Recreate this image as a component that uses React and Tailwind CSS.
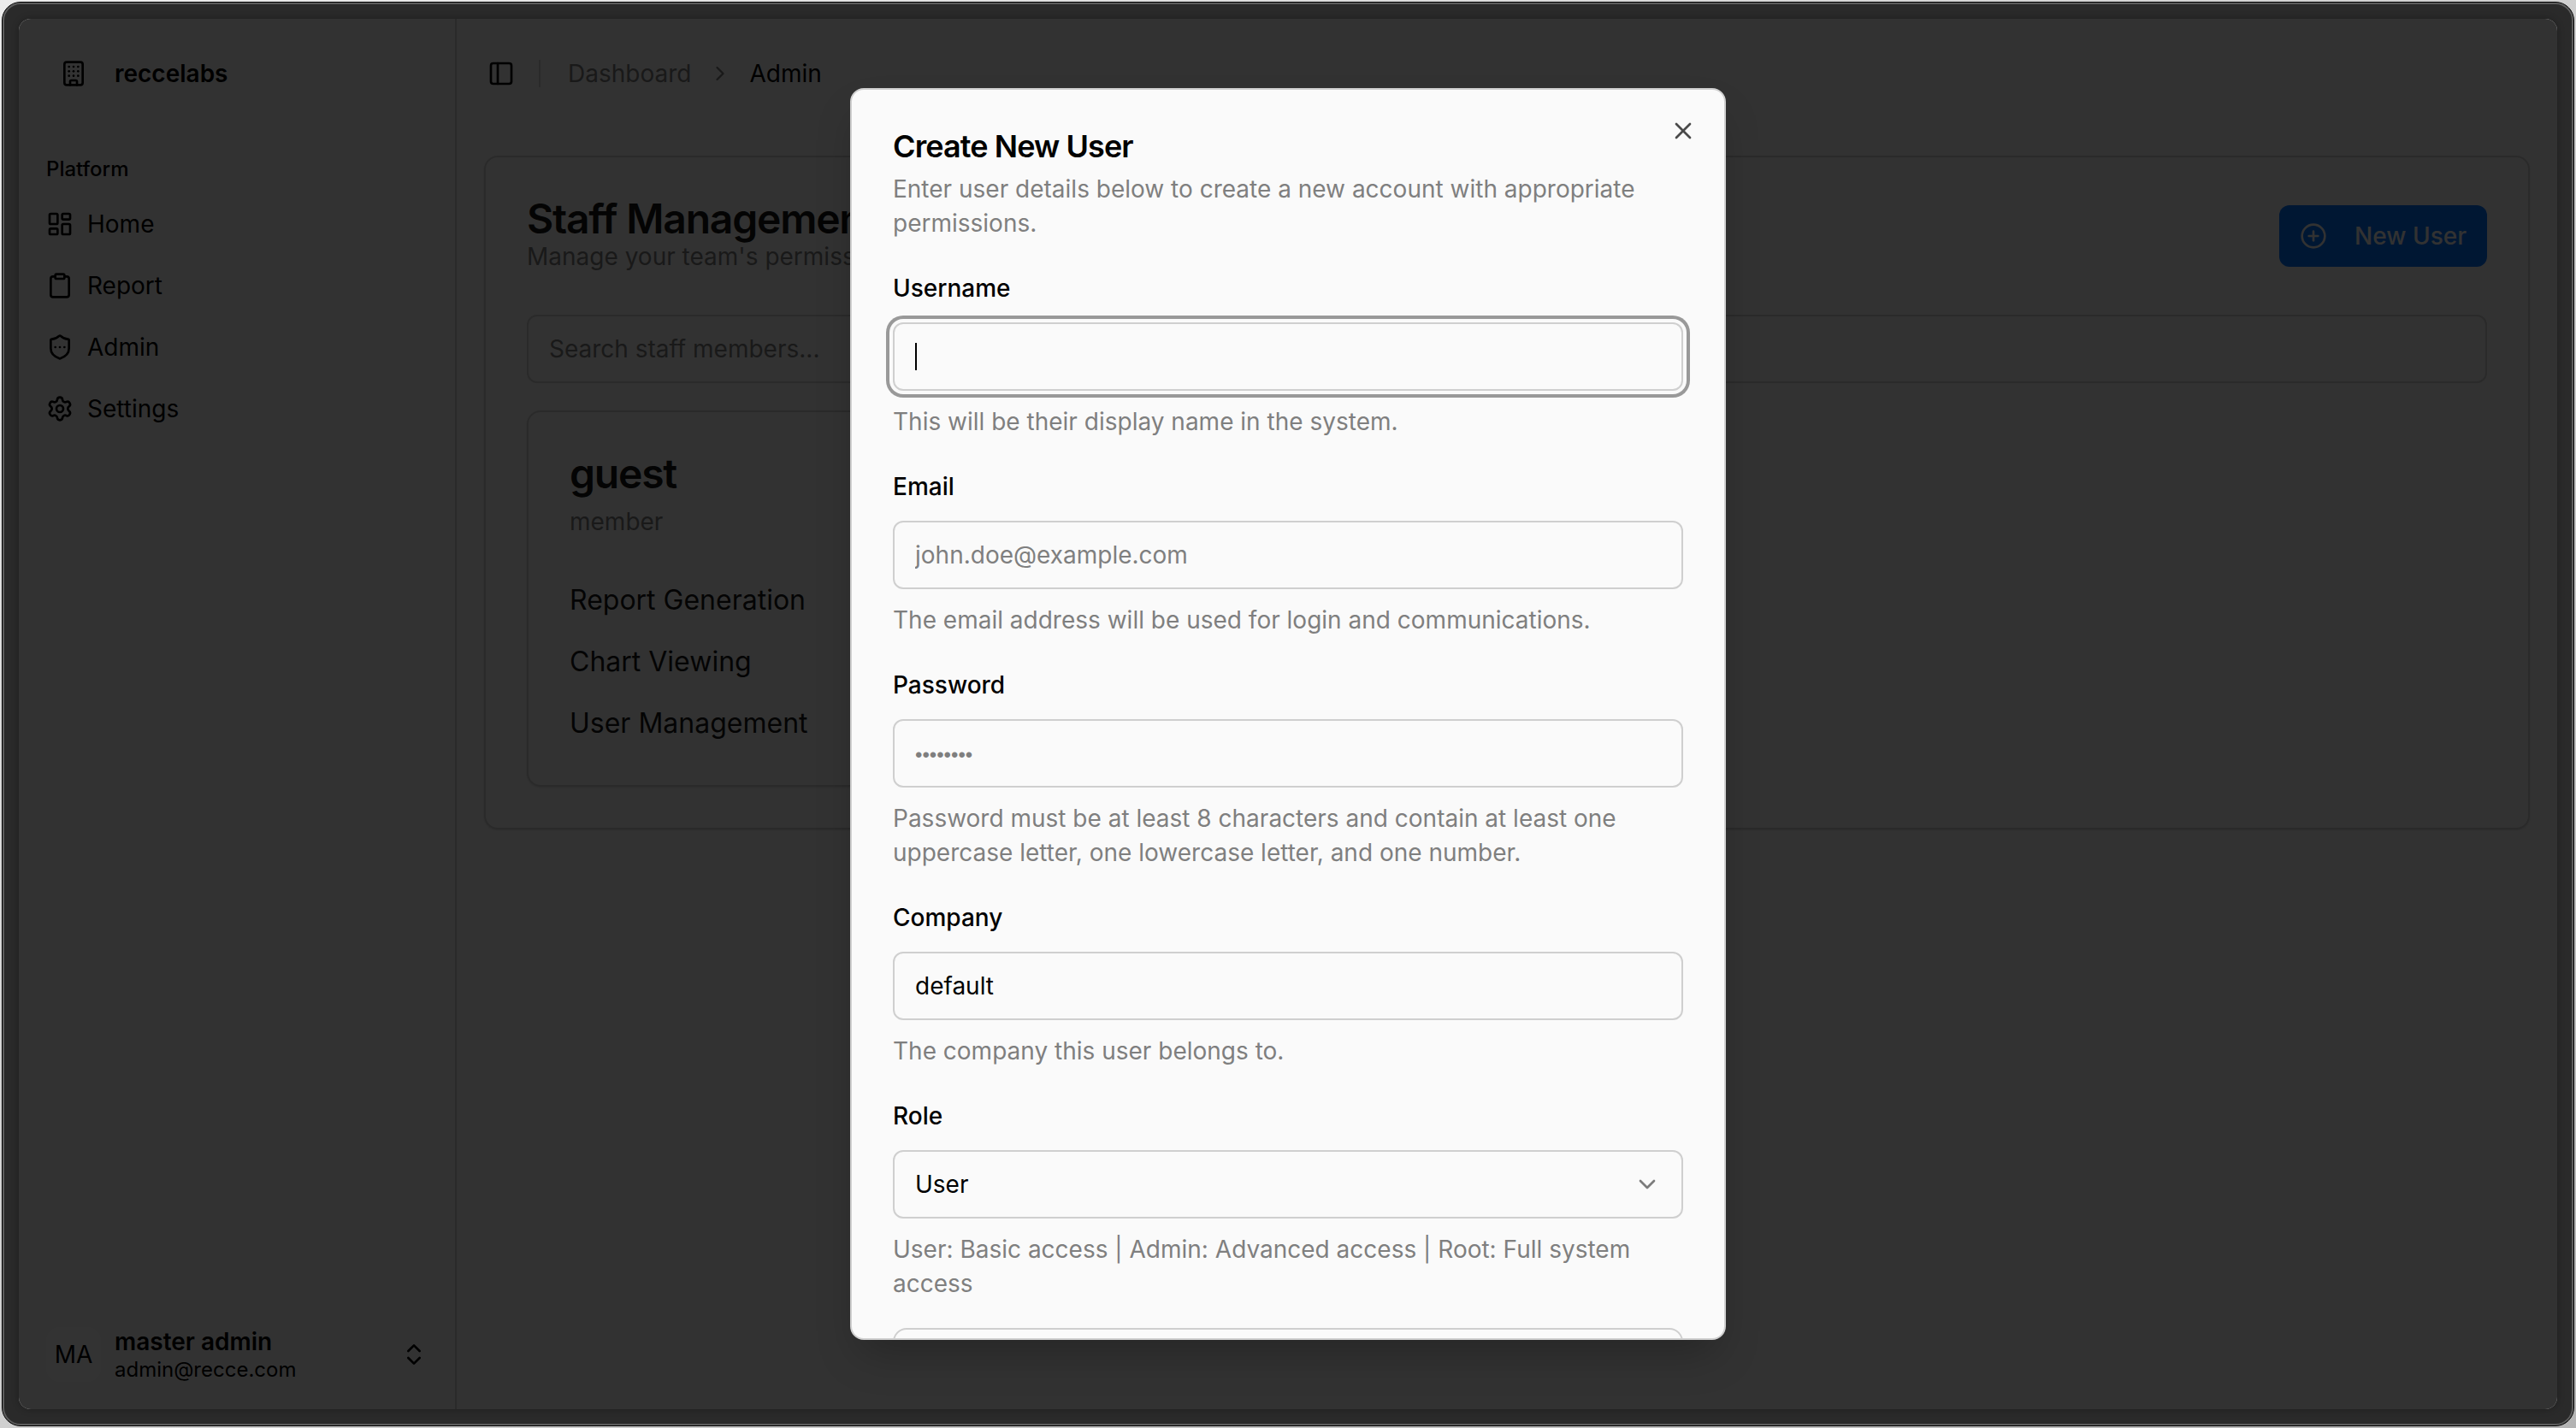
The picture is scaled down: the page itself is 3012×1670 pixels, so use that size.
import React from "react";
import {
  Building,
  ChevronDown,
  ChevronRight,
  ChevronsUpDown,
  CirclePlus,
  Clipboard,
  LayoutDashboard,
  PanelLeft,
  Settings,
  ShieldEllipsis,
  X,
} from "lucide-react";

const navItems = [
  { label: "Home", Icon: LayoutDashboard },
  { label: "Report", Icon: Clipboard },
  { label: "Admin", Icon: ShieldEllipsis },
  { label: "Settings", Icon: Settings },
];

const permissions = ["Report Generation", "Chart Viewing", "User Management"];

function Sidebar() {
  return (
    <aside className="flex w-[512px] shrink-0 flex-col border-r-2 border-[#cfcfcf] text-black">
      <div className="p-4">
        <button type="button" className="flex h-24 w-full items-center gap-4 px-4 text-left">
          <span className="flex size-16 items-center justify-center">
            <Building className="size-8" />
          </span>
          <span className="text-[28px] font-semibold">reccelabs</span>
        </button>
      </div>
      <nav className="flex-1 p-4">
        <h2 className="flex h-16 items-center px-4 text-2xl font-medium">Platform</h2>
        <ul className="flex flex-col gap-2">
          {navItems.map(({ label, Icon }) => (
            <li key={label}>
              <a href="#" className="flex h-16 items-center gap-4 px-4 text-[28px]">
                <Icon className="size-8" />
                {label}
              </a>
            </li>
          ))}
        </ul>
      </nav>
      <div className="p-4">
        <button type="button" className="flex h-24 w-full items-center gap-4 px-4 text-left">
          <span className="flex size-16 items-center justify-center rounded-2xl bg-white text-[28px]">
            MA
          </span>
          <span className="flex flex-1 flex-col">
            <span className="text-[28px] leading-tight font-semibold">master admin</span>
            <span className="text-2xl leading-tight">admin@recce.com</span>
          </span>
          <ChevronsUpDown className="size-8" />
        </button>
      </div>
    </aside>
  );
}

function TopBar() {
  return (
    <header className="flex h-32 shrink-0 items-center gap-4 px-6">
      <button
        type="button"
        aria-label="Toggle sidebar"
        className="flex size-14 items-center justify-center text-black"
      >
        <PanelLeft className="size-8" />
      </button>
      <div className="mr-4 h-8 w-[2px] bg-[#cfcfcf]" />
      <nav aria-label="Breadcrumb" className="flex items-center gap-5 text-[28px] text-[#7f7f7f]">
        <a href="#">Dashboard</a>
        <ChevronRight className="size-7" />
        <span className="text-black">Admin</span>
      </nav>
    </header>
  );
}

function StaffPanel() {
  return (
    <section className="mx-8 mt-8 rounded-2xl border-2 border-[#cfcfcf] p-12 text-[#171717] shadow-sm">
      <div className="flex items-center justify-between">
        <div>
          <h1 className="text-5xl leading-none font-semibold tracking-tight">Staff Management</h1>
          <p className="text-[28px] leading-10 text-[#7f7f7f]">
            Manage your team's permissions and access
          </p>
        </div>
        <button
          type="button"
          className="flex h-18 items-center gap-8 rounded-xl bg-[#0073ff] px-6 text-[28px] font-medium text-[#fafafa]"
        >
          <CirclePlus className="size-8" />
          New User
        </button>
      </div>
      <input
        type="search"
        aria-label="Search staff members"
        placeholder="Search staff members..."
        className="mt-12 block h-20 w-full rounded-xl border-2 border-[#cfcfcf] px-6 text-[28px] placeholder:text-[#7f7f7f]"
      />
      <div className="mt-8 grid grid-cols-3 gap-8">
        <article className="rounded-2xl border-2 border-[#cfcfcf] p-12 shadow-sm">
          <h2 className="text-5xl leading-none font-semibold tracking-tight">guest</h2>
          <p className="mt-3 text-[28px] leading-10 text-[#7f7f7f]">member</p>
          <ul className="mt-12 flex flex-col gap-6 text-[32px] leading-[48px]">
            {permissions.map((name) => (
              <li key={name}>{name}</li>
            ))}
          </ul>
        </article>
      </div>
    </section>
  );
}

const fieldClass =
  "block h-20 w-full appearance-none rounded-xl border-2 border-[#cfcfcf] bg-[#fafafa] px-6 text-[28px] text-black outline-none placeholder:text-[#7f7f7f]";

function Field({ id, label, hint, children }) {
  return (
    <div className="flex flex-col gap-4">
      <label htmlFor={id} className="text-[28px] leading-[48px] font-medium text-black">
        {label}
      </label>
      <div className="relative">{children}</div>
      <p className="text-[28px] leading-10 text-[#7f7f7f]">{hint}</p>
    </div>
  );
}

function CreateUserDialog() {
  return (
    <div
      role="dialog"
      aria-modal="true"
      aria-labelledby="dialog-title"
      className="relative flex max-h-[90%] w-full max-w-[1024px] flex-col overflow-hidden rounded-2xl border-2 border-[#cfcfcf] bg-[#fafafa] p-12 pb-0 shadow-2xl"
    >
      <h2 id="dialog-title" className="text-4xl leading-none font-semibold tracking-tight text-black">
        Create New User
      </h2>
      <p className="mt-3 text-[28px] leading-10 text-[#7f7f7f]">
        Enter user details below to create a new account with appropriate permissions.
      </p>
      <form className="mt-8 flex flex-col gap-8">
        <Field id="username" label="Username" hint="This will be their display name in the system.">
          <input
            id="username"
            type="text"
            className={`${fieldClass} ring-4 ring-[#999999] ring-offset-4 ring-offset-[#fafafa]`}
          />
          <span className="absolute top-6 left-[26px] h-8 w-[2px] bg-black" />
        </Field>
        <Field
          id="email"
          label="Email"
          hint="The email address will be used for login and communications."
        >
          <input id="email" type="email" placeholder="john.doe@example.com" className={fieldClass} />
        </Field>
        <Field
          id="password"
          label="Password"
          hint="Password must be at least 8 characters and contain at least one uppercase letter, one lowercase letter, and one number."
        >
          <input
            id="password"
            type="password"
            placeholder="••••••••"
            className={`${fieldClass} placeholder:font-['Liberation_Sans',sans-serif] placeholder:text-2xl`}
          />
        </Field>
        <Field id="company" label="Company" hint="The company this user belongs to.">
          <input id="company" type="text" defaultValue="default" className={fieldClass} />
        </Field>
        <Field
          id="role"
          label="Role"
          hint="User: Basic access | Admin: Advanced access | Root: Full system access"
        >
          <select id="role" defaultValue="User" className={fieldClass}>
            <option>User</option>
            <option>Admin</option>
            <option>Root</option>
          </select>
          <ChevronDown className="pointer-events-none absolute top-6 right-[26px] size-8 text-black opacity-50" />
        </Field>
        <div className="h-36 shrink-0 rounded-2xl border-2 border-[#cfcfcf]" />
      </form>
      <button type="button" aria-label="Close" className="absolute top-8 right-8 text-black opacity-70">
        <X className="size-8" />
      </button>
    </div>
  );
}

export default function App() {
  return (
    <div className="h-screen bg-linear-to-br from-[#ececec] to-[#b4b4b4] p-[2px] font-['Inter',sans-serif]">
      <div className="h-full rounded-[22px] border border-black bg-[#2a2a2a]">
        <div className="h-full rounded-[21px] border-2 border-[#5c5c5c] p-[17px]">
          <div className="relative flex h-full overflow-hidden rounded-[14px] bg-[#fafafa] shadow-[0_0_8px_rgba(0,0,0,0.3)]">
            <Sidebar />
            <main className="min-w-0 flex-1">
              <TopBar />
              <StaffPanel />
            </main>
            <div className="absolute inset-0 flex items-center justify-center bg-black/80">
              <CreateUserDialog />
            </div>
          </div>
        </div>
      </div>
    </div>
  );
}
